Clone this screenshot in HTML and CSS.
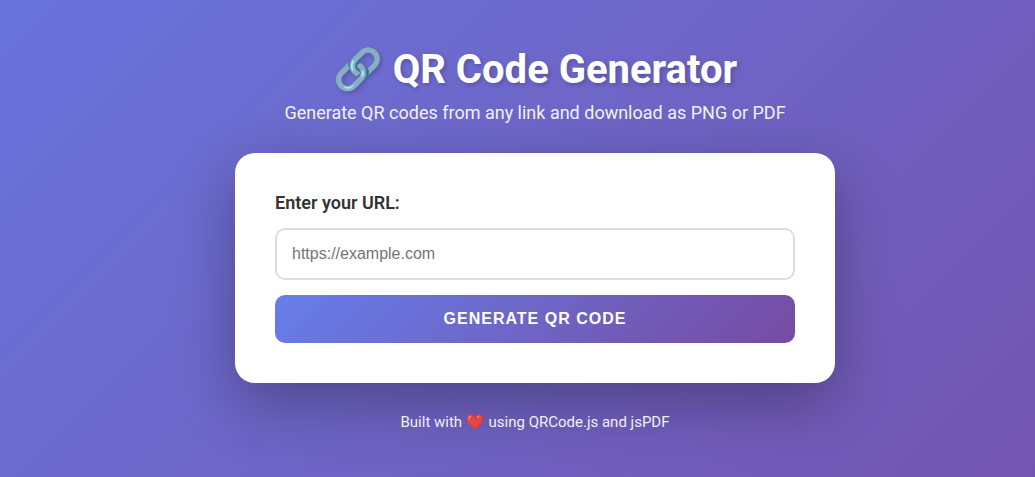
FILE: index.html
```html
<!DOCTYPE html>
<html lang="en">
<head>
<meta charset="UTF-8">
<meta name="viewport" content="width=device-width, initial-scale=1.0">
<title>QR Code Generator</title>
<link rel="stylesheet" href="styles.css">
</head>
<body>
<div class="container">
  <header class="header">
    <h1 class="title">🔗 QR Code Generator</h1>
    <p class="subtitle">Generate QR codes from any link and download as PNG or PDF</p>
  </header>
  <main class="card">
    <form class="form">
      <label class="label" for="url">Enter your URL:</label>
      <input class="input" type="url" id="url" placeholder="https://example.com">
      <button class="button" type="button">Generate QR Code</button>
    </form>
  </main>
  <footer class="footer">
    <p class="credit">Built with ❤️ using QRCode.js and jsPDF</p>
  </footer>
</div>
</body>
</html>
```
FILE: styles.css
```css
* {
  margin: 0;
  padding: 0;
  box-sizing: border-box;
}

body {
  min-height: 100vh;
  padding: 20px 20px 20px 55px;
  display: flex;
  align-items: center;
  justify-content: center;
  font-family: Roboto, sans-serif;
  background: linear-gradient(135deg, #667eea -35%, #764ba2 135%);
}

.container {
  width: 100%;
  max-width: 600px;
}

.header {
  margin-bottom: 30px;
  text-align: center;
  color: white;
}

.title {
  margin-bottom: 10px;
  font-size: 40px;
  text-shadow: 2px 2px 4px rgba(0, 0, 0, 0.2);
}

.subtitle {
  font-size: 18px;
  line-height: 20px;
  opacity: 0.9;
}

.card {
  padding: 40px;
  border-radius: 20px;
  background: white;
  box-shadow: 0 20px 60px rgba(0, 0, 0, 0.3);
}

.form {
  display: flex;
  flex-direction: column;
}

.label {
  margin-bottom: 15px;
  font-size: 18px;
  line-height: 20px;
  font-weight: 600;
  color: #333;
}

.input {
  width: 100%;
  height: 52px;
  margin-bottom: 15px;
  padding: 15px;
  border: 2px solid #ddd;
  border-radius: 10px;
  font: 16px "Liberation Sans", sans-serif;
}

.button {
  width: 100%;
  height: 48px;
  border: none;
  border-radius: 10px;
  background: linear-gradient(135deg, #667eea 0%, #764ba2 100%);
  color: white;
  font: bold 16px "Liberation Sans", sans-serif;
  text-transform: uppercase;
  letter-spacing: 1px;
}

.footer {
  margin-top: 30px;
  text-align: center;
  color: white;
  opacity: 0.9;
}

.credit {
  font-size: 15px;
}
```
